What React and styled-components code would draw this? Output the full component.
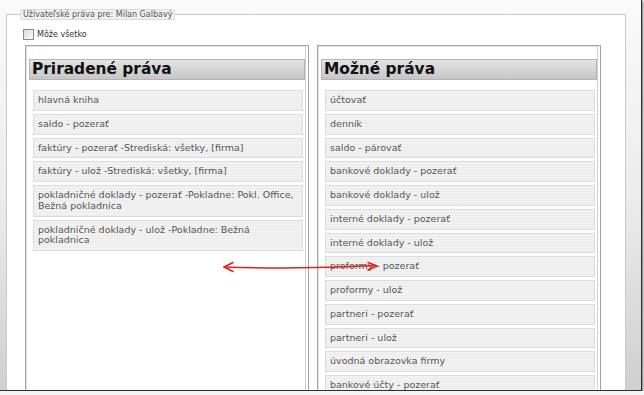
import styled, { createGlobalStyle } from 'styled-components'

const Global = createGlobalStyle`
  html, body {
    margin: 0;
    padding: 0;
    background: #f3f3f3;
    font-family: "DejaVu Sans", Verdana, sans-serif;
  }
`

const Frame = styled.div`
  position: relative;
  width: 641px;
  height: 390px;
  overflow: hidden;
  border-right: 1px solid #2e2e2e;
  border-bottom: 1px solid #2e2e2e;
  box-shadow: 1px 1px 2px rgba(0, 0, 0, 0.55);
  background: linear-gradient(to bottom, #fafafa 0%, #ececec 50%, #cfcfcf 100%);
`

const Fieldset = styled.fieldset`
  margin: 9px 15px 0 6px;
  padding: 7px 14px 0 14px;
  border: 1px solid #c8c8c8;
  background: #fff;
  min-height: 420px;
`

const Legend = styled.legend`
  padding: 0 2px;
  margin-left: -1px;
  font-size: 8px;
  line-height: 9px;
  color: #555;
  background: #f0f0f0;
  border: 1px solid #dcdcdc;
  border-radius: 2px;
`

const CheckRow = styled.label`
  display: flex;
  align-items: center;
  gap: 3px;
  font-size: 8px;
  color: #333;
  height: 12px;
  margin-top: 1px;
`

const Box = styled.span`
  width: 9px;
  height: 9px;
  margin-left: 2px;
  border: 1px solid #8a8a8a;
  background: linear-gradient(135deg, #dcdcdc, #fdfdfd);
`

const Columns = styled.div`
  display: flex;
  gap: 8px;
  margin: 5px 0 0 4px;
`

const Panel = styled.div`
  width: 284px;
  height: 400px;
  box-sizing: border-box;
  border: 1px solid #a4a4a4;
  box-shadow: inset -2px 0 0 #fff, inset -3px 0 0 #d0d0d0, inset 1px 1px 0 #e2e2e2;
  padding: 13px 3px 0 3px;
`

const Header = styled.h2`
  margin: 0 0 10px;
  height: 21px;
  box-sizing: border-box;
  padding: 0 2px;
  border: 1px solid #b4b4b4;
  background: linear-gradient(to bottom, #e4e4e4, #c6c6c6);
  font-size: 15.4px;
  line-height: 19px;
  font-weight: bold;
  color: #111;
`

const List = styled.div`
  display: flex;
  flex-direction: column;
  gap: 3px;
  margin: 0 2px 0 4px;
`

const Item = styled.div`
  border: 1px solid #dcdcdc;
  padding: 4px 2px 4px 4px;
  font-size: 9.5px;
  line-height: 10.75px;
  color: #555;
  background: repeating-linear-gradient(to bottom, #f1f1f1 0 2px, #ececec 2px 3px);
`

const Arrow = styled.svg`
  position: absolute;
  left: 220px;
  top: 258px;
  overflow: visible;
`

const assigned = [
  'hlavná kniha',
  'saldo - pozerať',
  'faktúry - pozerať -Strediská: všetky, [firma]',
  'faktúry - ulož -Strediská: všetky, [firma]',
  'pokladničné doklady - pozerať -Pokladne: Pokl. Office, Bežná pokladnica',
  'pokladničné doklady - ulož -Pokladne: Bežná pokladnica',
]

const possible = [
  'účtovať',
  'denník',
  'saldo - párovať',
  'bankové doklady - pozerať',
  'bankové doklady - ulož',
  'interné doklady - pozerať',
  'interné doklady - ulož',
  'proformy - pozerať',
  'proformy - ulož',
  'partneri - pozerať',
  'partneri - ulož',
  'úvodná obrazovka firmy',
  'bankové účty - pozerať',
  'bankové účty - ulož',
]

export default function App() {
  return (
    <>
      <Global />
      <Frame>
        <Fieldset>
          <Legend>Užívateľské práva pre: Milan Galbavý</Legend>
          <CheckRow>
            <Box />
            Môže všetko
          </CheckRow>
          <Columns>
            <Panel>
              <Header>Priradené práva</Header>
              <List>
                {assigned.map((t) => (
                  <Item key={t}>{t}</Item>
                ))}
              </List>
            </Panel>
            <Panel>
              <Header>Možné práva</Header>
              <List>
                {possible.map((t) => (
                  <Item key={t}>{t}</Item>
                ))}
              </List>
            </Panel>
          </Columns>
        </Fieldset>
        <Arrow width="165" height="18" viewBox="0 0 165 18">
          <g fill="none" stroke="#e3211b" strokeWidth="1.6" strokeLinecap="round" strokeLinejoin="round">
            <path d="M4 9 C 50 10.5, 110 10, 156 7.5" />
            <path d="M13 4.5 L4 9 L13 13.5" />
            <path d="M148 4.5 L157 8 L148 12" />
          </g>
        </Arrow>
      </Frame>
    </>
  )
}
